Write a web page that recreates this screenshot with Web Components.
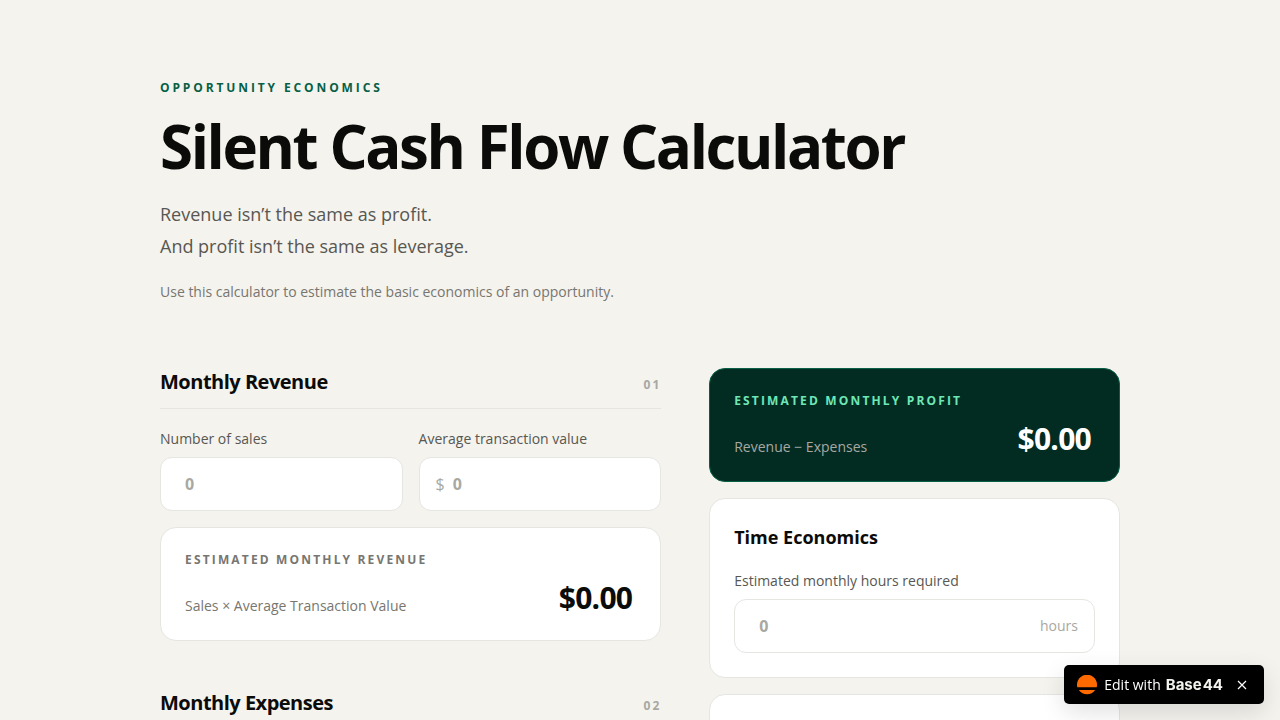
<!DOCTYPE html>
<html lang="en">
<head>
<meta charset="utf-8">
<meta name="viewport" content="width=device-width, initial-scale=1">
<title>Silent Cash Flow Calculator</title>
<style>
  :root {
    --ink: #0b0b09;
    --muted: #585752;
    --soft: #777670;
    --faint: #a8a8a2;
    --line: #e5e5e2;
  }
  body {
    margin: 0;
    background: #f4f3ee;
    color: var(--ink);
    font-family: "Open Sans", "Noto Sans", sans-serif;
    font-size: 14px;
    line-height: 20px;
  }
</style>
</head>
<body>
<calculator-page></calculator-page>
<edit-badge></edit-badge>

<script>
  function define(name, markup, setup) {
    const template = document.createElement('template');
    template.innerHTML = markup;
    customElements.define(name, class extends HTMLElement {
      constructor() {
        super();
        this.attachShadow({ mode: 'open' }).append(template.content.cloneNode(true));
      }
      connectedCallback() {
        if (setup) setup(this, this.shadowRoot);
      }
    });
  }

  define('page-intro', `
    <style>
      :host { display: block; }
      .eyebrow { margin: 0 0 18px; font-size: 12px; line-height: 16px; font-weight: 700; letter-spacing: 0.24em; text-transform: uppercase; color: #065f46; }
      h1 { margin: 0 0 20px; font-size: 60px; line-height: 64px; font-weight: 700; letter-spacing: -0.04em; }
      .lead { font-size: 18px; line-height: 32px; color: var(--muted); }
      .note { margin: 18px 0 0; line-height: 24px; color: var(--soft); }
    </style>
    <p class="eyebrow"><slot name="eyebrow"></slot></p>
    <h1><slot name="title"></slot></h1>
    <div class="lead"><slot></slot></div>
    <p class="note"><slot name="note"></slot></p>
  `);

  define('section-heading', `
    <style>
      :host { display: flex; align-items: baseline; justify-content: space-between; padding-bottom: 12px; border-bottom: 1px solid var(--line); }
      h2 { margin: 0; font-size: 20px; line-height: 28px; font-weight: 700; letter-spacing: -0.025em; }
      span { font-size: 12px; line-height: 16px; font-weight: 700; letter-spacing: 0.16em; color: var(--faint); }
    </style>
    <h2><slot></slot></h2>
    <span><slot name="number"></slot></span>
  `);

  define('number-field', `
    <style>
      :host { display: block; min-width: 0; }
      label { display: block; margin-bottom: 8px; color: var(--muted); }
      .box { display: flex; align-items: center; box-sizing: border-box; height: 54px; padding: 0 16px; background: #fff; border: 1px solid var(--line); border-radius: 12px; }
      .box:focus-within { border-color: #065f46; }
      input { flex: 1; min-width: 0; padding: 0 8px; border: 0; outline: 0; background: none; font: 700 16px/24px "Open Sans", "Noto Sans", sans-serif; color: var(--ink); }
      input::placeholder { color: var(--faint); opacity: 1; }
      .prefix { font-size: 16px; color: var(--faint); }
      .suffix { color: var(--faint); }
    </style>
    <label for="value"></label>
    <div class="box"><span class="prefix"></span><input id="value" type="text" inputmode="decimal" placeholder="0"><span class="suffix"></span></div>
  `, (host, root) => {
    root.querySelector('label').textContent = host.getAttribute('label');
    root.querySelector('.prefix').textContent = host.getAttribute('prefix') || '';
    root.querySelector('.suffix').textContent = host.getAttribute('suffix') || '';
  });

  define('surface-card', `
    <style>
      :host { display: block; padding: 24px; background: #fff; border: 1px solid var(--line); border-radius: 16px; }
      ::slotted(h3) { margin: 0 0 20px; font-size: 18px; line-height: 28px; font-weight: 700; }
    </style>
    <slot></slot>
  `);

  define('result-card', `
    <style>
      :host { display: block; padding: 24px; background: #fff; border: 1px solid var(--line); border-radius: 16px; color: var(--soft); --amount: var(--ink); }
      :host([dark]) { background: #022c22; border-color: #065f46; color: var(--faint); --amount: #fff; --title: #6ee7b7; }
      .title { margin: 0 0 12px; font-size: 12px; line-height: 16px; font-weight: 700; letter-spacing: 0.18em; text-transform: uppercase; color: var(--title, inherit); }
      .row { display: flex; align-items: flex-end; justify-content: space-between; gap: 16px; padding-right: 4px; }
      output { font-size: 30px; line-height: 36px; font-weight: 700; letter-spacing: -0.025em; color: var(--amount); }
    </style>
    <p class="title"><slot name="title"></slot></p>
    <div class="row"><span><slot></slot></span><output><slot name="amount"></slot></output></div>
  `);

  define('calculator-page', `
    <style>
      :host { display: block; max-width: 960px; margin: 0 auto; padding: 80px 32px 0; }
      p { margin: 0; }
      main { display: grid; grid-template-columns: 1.22fr 1fr; align-items: start; gap: 48px; margin-top: 64px; }
      .forms { display: grid; gap: 48px; }
      section { display: grid; gap: 16px; }
      .fields { display: grid; grid-template-columns: 1fr 1fr; gap: 16px; padding-top: 4px; }
      aside { display: grid; gap: 16px; }
      @media (max-width: 800px) { main { grid-template-columns: 1fr; } }
    </style>
    <page-intro>
      <span slot="eyebrow">Opportunity Economics</span>
      <span slot="title">Silent Cash Flow Calculator</span>
      <p>Revenue isn’t the same as profit.</p>
      <p>And profit isn’t the same as leverage.</p>
      <span slot="note">Use this calculator to estimate the basic economics of an opportunity.</span>
    </page-intro>
    <main>
      <div class="forms">
        <section>
          <section-heading>Monthly Revenue<span slot="number">01</span></section-heading>
          <div class="fields">
            <number-field label="Number of sales"></number-field>
            <number-field label="Average transaction value" prefix="$"></number-field>
          </div>
          <result-card>
            <span slot="title">Estimated Monthly Revenue</span>
            Sales × Average Transaction Value
            <span slot="amount">$0.00</span>
          </result-card>
        </section>
        <section>
          <section-heading>Monthly Expenses<span slot="number">02</span></section-heading>
        </section>
      </div>
      <aside>
        <result-card dark>
          <span slot="title">Estimated Monthly Profit</span>
          Revenue − Expenses
          <span slot="amount">$0.00</span>
        </result-card>
        <surface-card>
          <h3>Time Economics</h3>
          <number-field label="Estimated monthly hours required" suffix="hours"></number-field>
        </surface-card>
        <surface-card></surface-card>
      </aside>
    </main>
  `);

  define('edit-badge', `
    <style>
      :host { position: fixed; right: 16px; bottom: 16px; display: flex; align-items: center; box-sizing: border-box; height: 39px; padding: 0 12px 0 13px; background: #000; border-radius: 5px; box-shadow: 0 8px 24px rgb(0 0 0 / 0.12); color: #fff; }
      a { display: flex; align-items: center; color: inherit; text-decoration: none; }
      .mark { margin-right: 7px; }
      b { display: flex; gap: 1px; margin-left: 5px; font: 700 15px/20px Inter, sans-serif; color: #f4f3ee; }
      button { display: grid; place-items: center; width: 20px; height: 20px; margin-left: 9px; padding: 0; border: 0; background: none; color: inherit; }
      svg { display: block; }
    </style>
    <a href="#edit">
      <svg class="mark" width="20" height="20" viewBox="0 0 20 20" fill="#ff6a00" aria-hidden="true">
        <path d="M0.3 12.2A10 10 0 1 1 19.7 12.2Z"/>
        <path d="M1.8 15H18.2A10 10 0 0 1 1.8 15Z"/>
      </svg>
      <span>Edit with</span><b><span>Base</span><span>44</span></b>
    </a>
    <button type="button" aria-label="Close">
      <svg width="10" height="10" viewBox="0 0 10 10" fill="none" stroke="#fff" stroke-width="1.2" aria-hidden="true"><path d="M1 1 9 9M9 1 1 9"/></svg>
    </button>
  `);
</script>
</body>
</html>
